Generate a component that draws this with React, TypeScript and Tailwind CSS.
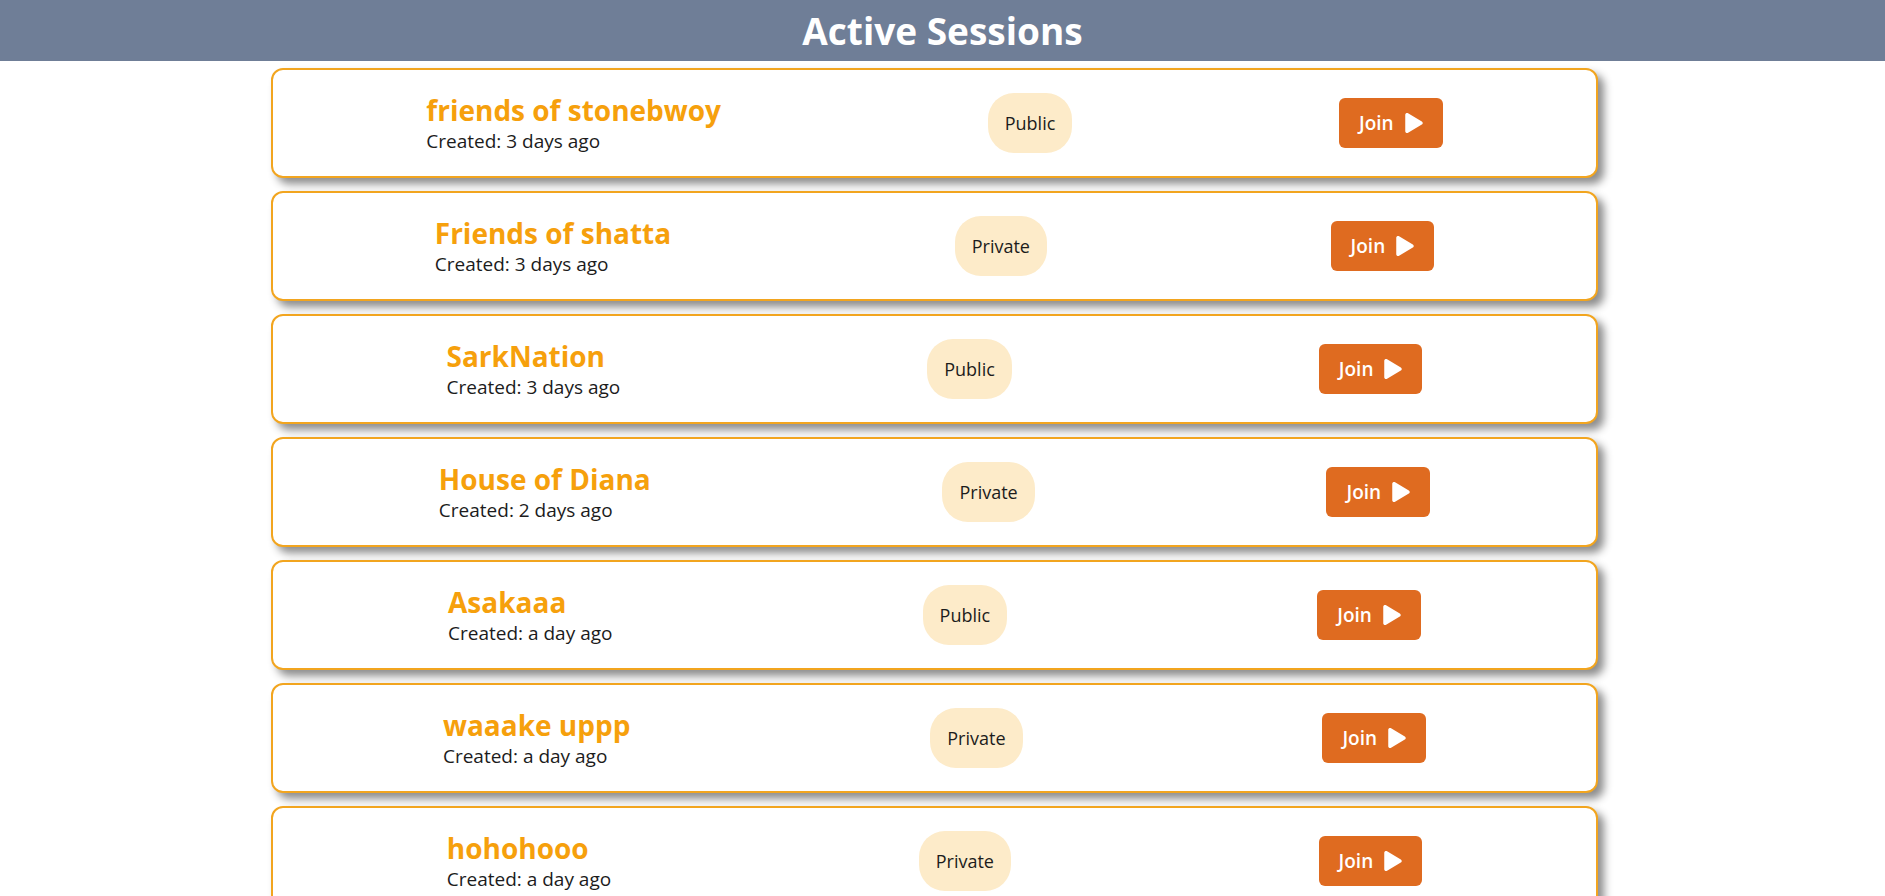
import React from 'react';
import { FaPlay } from 'react-icons/fa';

interface Session {
  name: string;
  created: string;
  visibility: 'Public' | 'Private';
}

const sessions: Session[] = [
  { name: 'friends of stonebwoy', created: '3 days ago', visibility: 'Public' },
  { name: 'Friends of shatta', created: '3 days ago', visibility: 'Private' },
  { name: 'SarkNation', created: '3 days ago', visibility: 'Public' },
  { name: 'House of Diana', created: '2 days ago', visibility: 'Private' },
  { name: 'Asakaaa', created: 'a day ago', visibility: 'Public' },
  { name: 'waaake uppp', created: 'a day ago', visibility: 'Private' },
  { name: 'hohohooo', created: 'a day ago', visibility: 'Private' },
];

const SessionCard: React.FC<{ session: Session }> = ({ session }) => (
  <div className="flex items-center justify-around h-[110px] px-5 bg-white border-2 border-[#f2a51f] rounded-xl shadow-[6px_6px_8px_rgba(0,0,0,0.45)]">
    <div className="flex flex-col">
      <h2 className="text-[28px] leading-[36px] font-bold text-[#f6a00c] m-0">{session.name}</h2>
      <p className="text-[19px] leading-[26px] text-[#1c1c1c] m-0">Created: {session.created}</p>
    </div>
    <span className="flex items-center h-[60px] px-[17px] rounded-[26px] bg-[#fdebc9] text-[18px] text-[#1c1c1c]">
      {session.visibility}
    </span>
    <button className="flex items-center gap-[11px] h-[50px] px-[20px] rounded-md bg-[#df6b20] text-white text-[19px] font-semibold">
      Join <FaPlay className="w-[18px] h-[20px]" />
    </button>
  </div>
);

const App: React.FC = () => {
  return (
    <div className="min-h-screen bg-white font-['Open_Sans',sans-serif]">
      <header className="h-[61px] flex items-center justify-center bg-[#6f7e97]">
        <h1 className="text-[37px] font-bold text-white m-0 leading-none">Active Sessions</h1>
      </header>
      <div className="flex flex-col gap-[13px] pt-[7px] pb-6 pl-[271px] pr-[287px]">
        {sessions.map((s) => (
          <SessionCard key={s.name} session={s} />
        ))}
      </div>
    </div>
  );
};

export default App;
